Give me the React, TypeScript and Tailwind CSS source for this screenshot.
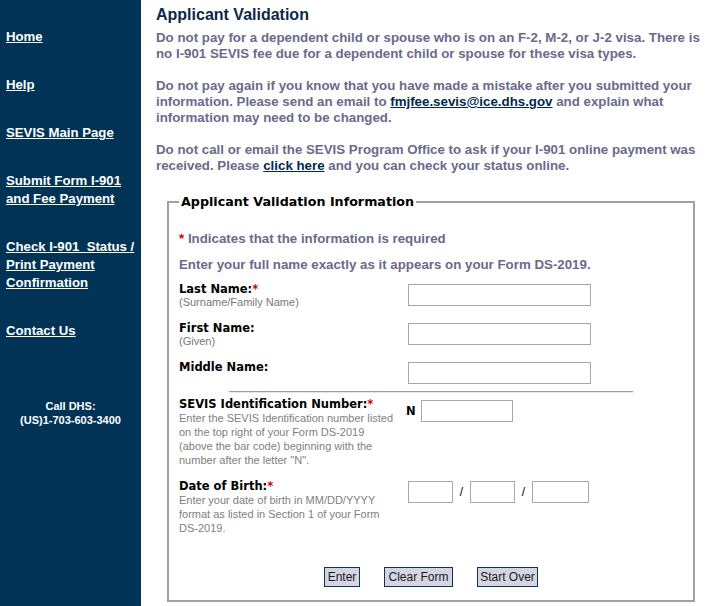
import React from 'react';

const navLinks: string[][] = [
  ['Home'],
  ['Help'],
  ['SEVIS Main Page'],
  ['Submit Form I-901', 'and Fee Payment'],
  ['Check I-901\u00a0 Status /', 'Print Payment', 'Confirmation'],
  ['Contact Us'],
];

const Req = () => <span className="text-[#cc0000]">*</span>;

const TextBox = ({ w }: { w: string }) => (
  <div className={`h-[22px] ${w} border border-[#a8a8a8] bg-white`} />
);

const labelCls = "font-['DejaVu_Sans',Verdana,sans-serif] text-[11.5px] font-bold leading-[14px] text-black";

const Sidebar: React.FC = () => (
  <div className="w-[141px] shrink-0 bg-[#003356] px-[6px] pt-[28px] font-['Liberation_Sans',Arial,sans-serif] font-bold text-white">
    <ul className="flex flex-col gap-[30px] text-[13.2px] leading-[18px]">
      {navLinks.map((lines) => (
        <li key={lines[0]}>
          <a href="#" className="underline">
            {lines.map((l, i) => (
              <span key={i} className="block">
                {l}
              </span>
            ))}
          </a>
        </li>
      ))}
    </ul>
    <div className="mt-[59px] -mx-[6px] text-center text-[11px] leading-[14px]">
      <div>Call DHS:</div>
      <div>(US)1-703-603-3400</div>
    </div>
  </div>
);

const App: React.FC = () => {
  return (
    <div className="flex min-h-[606px] bg-white">
      <Sidebar />

      <main className="flex-1 pl-[15px] pr-[4px] pt-[5px] font-['Liberation_Sans',Arial,sans-serif]">
        <h1 className="text-[16px] font-bold leading-[19px] text-[#0a2847]">Applicant Validation</h1>

        <div className="mt-[6px] space-y-[16px] text-[13.3px] font-bold leading-[16px] text-[#6a6a8a]">
          <p>
            Do not pay for a dependent child or spouse who is on an F-2, M-2, or J-2 visa. There is no I-901 SEVIS
            fee due for a dependent child or spouse for these visa types.
          </p>
          <p>
            Do not pay again if you know that you have made a mistake after you submitted your information. Please
            send an email to{' '}
            <a href="#" className="text-[#002a4d] underline">
              fmjfee.sevis@ice.dhs.gov
            </a>{' '}
            and explain what information may need to be changed.
          </p>
          <p>
            Do not call or email the SEVIS Program Office to ask if your I-901 online payment was received. Please{' '}
            <a href="#" className="text-[#002a4d] underline">
              click here
            </a>{' '}
            and you can check your status online.
          </p>
        </div>

        <fieldset className="mt-[20px] ml-[11px] w-[528px] border-2 border-[#a0a0a0] px-[10px] pb-[13px]">
          <legend className="px-[2px] font-['DejaVu_Sans',Verdana,sans-serif] text-[12.7px] font-bold leading-[16px] text-black">
            Applicant Validation Information
          </legend>

          <div className="mt-[21px] text-[13.3px] font-bold leading-[16px] text-[#6a6a8a]">
            <p>
              <Req /> Indicates that the information is required
            </p>
            <p className="mt-[10px]">Enter your full name exactly as it appears on your Form DS-2019.</p>
          </div>

          <div className="mt-[9px] grid grid-cols-[229px_1fr]">
            {/* Last name */}
            <div className="h-[39px]">
              <div className={labelCls}>
                Last Name:<Req />
              </div>
              <div className="text-[11px] leading-[13px] text-[#777]">(Surname/Family Name)</div>
            </div>
            <div className="pt-[2px]">
              <TextBox w="w-[183px]" />
            </div>

            {/* First name */}
            <div className="h-[39px]">
              <div className={labelCls}>First Name:</div>
              <div className="text-[11px] leading-[13px] text-[#777]">(Given)</div>
            </div>
            <div className="pt-[2px]">
              <TextBox w="w-[183px]" />
            </div>

            {/* Middle name */}
            <div className="h-[24px]">
              <div className={labelCls}>Middle Name:</div>
            </div>
            <div className="pt-[2px]">
              <TextBox w="w-[183px]" />
            </div>
          </div>

          <div className="mx-auto mt-[7px] h-[2px] w-[404px] border-t border-b border-t-[#a0a0a0] border-b-[#e6e6e6]" />

          <div className="mt-[4px] grid grid-cols-[227px_1fr]">
            <div>
              <div className={labelCls}>
                SEVIS Identification Number:<Req />
              </div>
              <div className="w-[214px] text-[11px] leading-[14px] text-[#808080]">
                Enter the SEVIS Identification number listed on the top right of your Form DS-2019 (above the bar
                code) beginning with the number after the letter "N".
              </div>
            </div>
            <div className="flex items-start pt-[3px]">
              <span className={`mt-[4px] w-[15px] ${labelCls}`}>N</span>
              <TextBox w="w-[92px]" />
            </div>

            <div className="mt-[12px]">
              <div className={labelCls}>
                Date of Birth:<Req />
              </div>
              <div className="w-[214px] text-[11px] leading-[14px] text-[#808080]">
                Enter your date of birth in MM/DD/YYYY format as listed in Section 1 of your Form DS-2019.
              </div>
            </div>
            <div className="mt-[12px] flex items-start pt-[2px] pl-[2px]">
              <TextBox w="w-[45px]" />
              <span className="w-[17px] pt-[4px] text-center text-[12px] leading-[14px] text-black">/</span>
              <TextBox w="w-[45px]" />
              <span className="w-[17px] pt-[4px] text-center text-[12px] leading-[14px] text-black">/</span>
              <TextBox w="w-[57px]" />
            </div>
          </div>

          <div className="mt-[32px] flex justify-center gap-[24px]">
            {[
              ['Enter', 'w-[36px]'],
              ['Clear Form', 'w-[69px]'],
              ['Start Over', 'w-[61px]'],
            ].map(([label, w]) => (
              <button
                key={label}
                type="button"
                className={`${w} h-[20px] border border-[#0b3552] bg-[#d3d6e2] text-center text-[12px] leading-[18px] text-[#1a1a1a]`}
              >
                {label}
              </button>
            ))}
          </div>
        </fieldset>
      </main>
    </div>
  );
};

export default App;
